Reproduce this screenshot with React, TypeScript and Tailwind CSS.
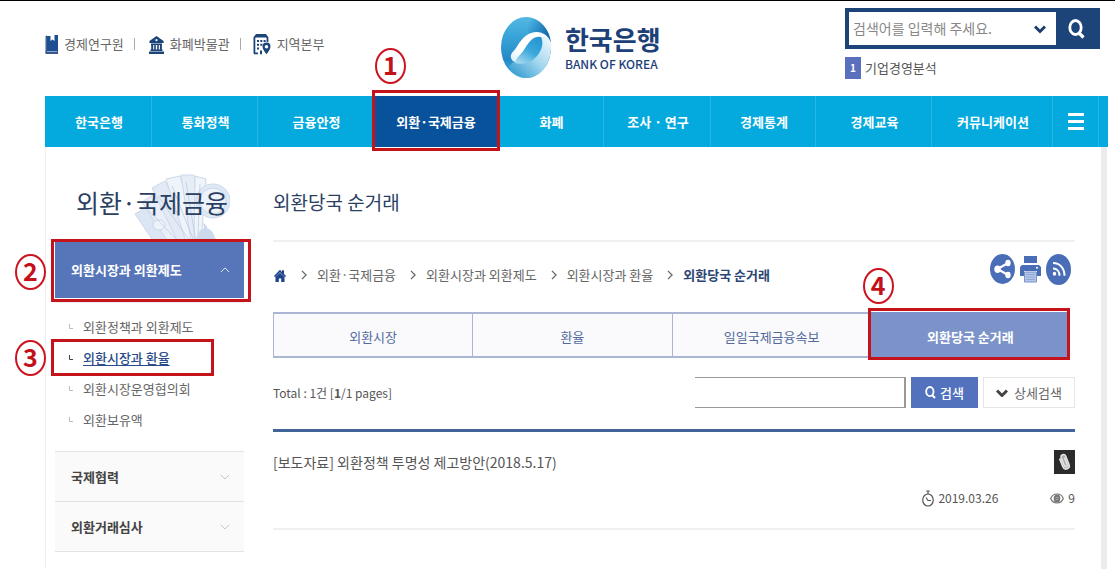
import type { ReactNode } from "react";

type Tone = { className: string };

function StepNumber({ n, className }: { n: number; className: string }) {
  return (
    <span
      className={`pointer-events-none absolute z-20 flex h-9 w-[31px] items-center justify-center rounded-[50%] border-2 border-[#cc1420] pb-1 text-[25px] leading-none font-bold text-[#c41019] ${className}`}
    >
      {n}
    </span>
  );
}

function Marker({ className }: Tone) {
  return <span aria-hidden="true" className={`pointer-events-none absolute z-10 border-3 border-[#c4131a] ${className}`} />;
}

function BookIcon() {
  return (
    <svg viewBox="0 0 13 19" className="h-[19px] w-[13px]" aria-hidden="true">
      <path d="M.5 1.500 2 0v16L.5 18z" fill="#43618d" />
      <path d="M2 1h3.500v5l2-1.500L9.500 6V0H13v16H2z" fill="#1d4f93" />
      <path d="M.5 16H13v3H.5z" fill="#36578a" />
      <path d="M2 16.200h10v.8H2z" fill="#a9bcd8" />
    </svg>
  );
}

function MuseumIcon() {
  return (
    <svg viewBox="0 0 15 19" className="h-[19px] w-[15px]" fill="#1d4479" aria-hidden="true">
      <path d="M7.5 1 14.6 6v2H.4V6z" />
      <circle cx="7.5" cy="5.2" r="1.1" fill="#fff" />
      <path d="M2 8.5h11V10H2zM2.2 10h2v5h-2zM5.2 10h1.6v5H5.2zM8.2 10h1.6v5H8.2zM10.9 10h2v5h-2zM1.5 14.6h12V16h-12zM0 16.6h15V19H0z" />
    </svg>
  );
}

function BranchIcon() {
  return (
    <svg viewBox="0 0 18 21" className="h-[21px] w-[18px]" aria-hidden="true">
      <path d="M1.4 19.5V3.5L3.5 1h9l2 2.5V8" fill="none" stroke="#1d4479" strokeWidth="1.8" />
      <path d="M2 1.5h12v2H2zM4 6h2v2H4zM7.3 6h2v2h-2zM10.6 6h2v2h-2zM4 9.7h2v2H4zM7.3 9.7h2v2h-2zM4 13.4h2v2H4zM1 18.5h4v1.8H1zM7 16.5h2v3.8H7z" fill="#1d4479" />
      <path d="M13.5 8.5a4 4 0 0 1 4 4c0 2.8-2.3 5.2-4 7.8-1.7-2.6-4-5-4-7.8a4 4 0 0 1 4-4z" fill="#1d4479" />
      <circle cx="13.5" cy="12.7" r="1.8" fill="#fff" />
    </svg>
  );
}

function BankLogo() {
  return (
    <svg viewBox="0 0 50 61" className="h-[61px] w-[50px]" aria-hidden="true">
      <defs>
        <linearGradient id="logoBase" x1="0.4" y1="0" x2="0.4" y2="1">
          <stop offset="0" stopColor="#53b8e2" />
          <stop offset="0.3" stopColor="#3aa5d8" />
          <stop offset="0.7" stopColor="#2389c6" />
          <stop offset="1" stopColor="#4fb2de" />
        </linearGradient>
        <linearGradient id="logoPale" x1="0.95" y1="0" x2="0.1" y2="0.9">
          <stop offset="0" stopColor="#eef8fd" />
          <stop offset="0.5" stopColor="#a5d8ef" />
          <stop offset="1" stopColor="#3a9fd3" />
        </linearGradient>
        <linearGradient id="logoSwoosh" x1="0" y1="1" x2="1" y2="0">
          <stop offset="0" stopColor="#d8eef9" />
          <stop offset="0.3" stopColor="#ffffff" />
          <stop offset="0.8" stopColor="#ffffff" />
          <stop offset="1" stopColor="#d5ecf7" />
        </linearGradient>
        <linearGradient id="logoDrop" x1="0.8" y1="0" x2="0.2" y2="1">
          <stop offset="0" stopColor="#2596d0" />
          <stop offset="0.5" stopColor="#3aa8dc" />
          <stop offset="1" stopColor="#a5d8ef" />
        </linearGradient>
        <linearGradient id="logoCap" x1="0" y1="0" x2="1" y2="0.3">
          <stop offset="0.2" stopColor="#1a77b8" stopOpacity="0" />
          <stop offset="1" stopColor="#1268ab" />
        </linearGradient>
      </defs>
      <ellipse cx="25" cy="30.500" rx="25" ry="30.500" fill="url(#logoBase)" />
      <path d="M25 0c13 0 23 11 25 25-5-9-13-11-21-8C24 11 22 5 25 0z" fill="url(#logoCap)" />
      <path d="M50 26c1 18-9 35-25 35-7 0-13-5-17-11 2-3 3-5 6-5 10 0 18-3 23-10 3-5 4-10 3-15 5 0 8 2 10 6z" fill="url(#logoPale)" />
      <path d="M50 26c-3-9-11-13-20-10-8 3-11 9-15 15-3 4-6 6-5 10 1 3 3 4 5 4 1-5 5-7 8-12 4-6 7-12 13-13 6-1 11 1 14 6z" fill="url(#logoSwoosh)" />
      <path d="M40 20c3 6 1 13-4 19-6 7-14 9-22 7 1-6 6-7 10-14 4-6 7-12 16-12z" fill="url(#logoDrop)" />
    </svg>
  );
}

function SearchIcon({ className }: Tone) {
  return (
    <svg viewBox="0 0 17 20" className={className} fill="none" stroke="currentColor" aria-hidden="true">
      <ellipse cx="7.500" cy="8.500" rx="5.700" ry="7" strokeWidth="2.800" />
      <path d="m10.500 13.500 5 5" strokeWidth="3.200" />
    </svg>
  );
}

function Chevron({ className, weight }: { className: string; weight: number }) {
  return (
    <svg viewBox="0 0 12 8" className={className} fill="none" stroke="currentColor" strokeWidth={weight} aria-hidden="true">
      <path d="m1 1.500 5 5 5-5" />
    </svg>
  );
}

function Banknotes() {
  return (
    <svg viewBox="0 0 96 68" className="absolute right-[14px] bottom-0 h-[68px] w-24" aria-hidden="true">
      <g stroke="#ccd8ea" strokeWidth="1">
        <path d="m1 40 10-6 34 34H20z" fill="#dbe5f3" />
        <path d="m8 28 11-7 38 47H34z" fill="#e8eff8" />
        <path d="M18 14 31 7l32 61H44z" fill="#e2eaf5" />
        <path d="m32 5 14-3 20 66H52z" fill="#eff4fa" />
        <path d="M47 1h13l6 67h-9z" fill="#e6edf7" />
        <path d="m61 2 11 3-5 63h-7z" fill="#f1f5fa" />
        <circle cx="79" cy="27" r="17" fill="#dfe9f5" />
        <circle cx="79" cy="27" r="13" fill="#edf3fa" />
        <ellipse cx="25" cy="51" rx="6" ry="5" fill="#eef3fa" />
      </g>
      <g fill="none" stroke="#bccbe3" strokeWidth="0.800">
        <path d="m14 36 30 31M24 22l32 45M38 12l22 55M52 8l10 60M66 10l-2 50" />
      </g>
      <path d="M62 68c0-7 3-12 8-14l-1-5c3 1 4 3 4 5 5 2 7 6 8 10l4 4z" fill="#cddaec" />
    </svg>
  );
}

function HomeIcon() {
  return (
    <svg viewBox="0 0 12 13" className="h-[13px] w-3" fill="#1f4489" aria-hidden="true">
      <path d="M6 .8 8 3V1.300h2V5l2 2-1 1.300-5-5-5 5L0 7z" />
      <path d="M6 3.800 10.500 8v5H7.200V9.500H4.800V13H1.500V8z" />
    </svg>
  );
}

function ShareIcon() {
  return (
    <svg viewBox="0 0 25 30" className="h-[30px] w-[25px]" aria-hidden="true">
      <ellipse cx="12.500" cy="15" rx="12.500" ry="15" fill="#4a6db8" />
      <path d="M18 9 7.500 15 18 21" fill="none" stroke="#fff" strokeWidth="2.200" />
      <g fill="#fff">
        <ellipse cx="18" cy="9" rx="2.700" ry="3.200" />
        <ellipse cx="7.500" cy="15.200" rx="3.200" ry="3.700" />
        <ellipse cx="18" cy="21" rx="2.700" ry="3.200" />
      </g>
    </svg>
  );
}

function PrintIcon() {
  return (
    <svg viewBox="0 0 21 28" className="h-7 w-[21px]" aria-hidden="true">
      <path d="M4 1h13v7H4z" fill="#4a6db8" />
      <path d="M2 10h17l2 2v9h-4v-5H4v5H0v-9z" fill="#4a6db8" />
      <path d="M16 12h2v1.500h-2z" fill="#fff" />
      <path d="M4.500 17h12v10h-12z" fill="#b4c5e8" stroke="#7892cb" />
      <path d="M6 19.500h9M6 22h9M6 24.500h9" stroke="#90a7d8" />
    </svg>
  );
}

function RssIcon() {
  return (
    <svg viewBox="0 0 25 31" className="h-[31px] w-[25px]" aria-hidden="true">
      <ellipse cx="12.500" cy="15.500" rx="12.500" ry="15.500" fill="#4a6db8" />
      <ellipse cx="8.500" cy="19.800" rx="1.700" ry="2" fill="#fff" />
      <path d="M7 14.500c4 0 6.500 3 6.500 7.300M7 9c7 0 11.500 5.500 11.500 12.800" fill="none" stroke="#fff" strokeWidth="2" />
    </svg>
  );
}

function ClipIcon() {
  return (
    <svg viewBox="0 0 21 24" className="h-6 w-[21px]" aria-label="첨부파일" role="img">
      <path d="M0 0h21v24H0z" fill="#2b2b2b" />
      <g transform="rotate(-22 10.500 12)" fill="none" stroke="#e4e4e4" strokeWidth="1.500">
        <path d="M7.200 7v9a3.300 3.300 0 0 0 6.600 0V7a2.400 2.400 0 0 0-4.800 0v8.500a1.500 1.500 0 0 0 3 0V8" fill="#aaa" />
      </g>
    </svg>
  );
}

function ClockIcon() {
  return (
    <svg viewBox="0 0 12 17" className="h-[17px] w-3" fill="none" stroke="#555" strokeWidth="1.200" aria-hidden="true">
      <ellipse cx="6" cy="10" rx="5.300" ry="6" />
      <path d="M6 4V1M4.300 1h3.400M4 7.500l2 3h3" />
    </svg>
  );
}

function EyeIcon() {
  return (
    <svg viewBox="0 0 14 11" className="h-[11px] w-3.5" fill="none" stroke="#777" strokeWidth="1.200" aria-hidden="true">
      <path d="M.7 5.500C3-.5 11-.5 13.300 5.500 11 11.500 3 11.500.7 5.500z" />
      <ellipse cx="7" cy="5.500" rx="2.700" ry="3.400" fill="#777" />
      <path d="M5.500 4.500h3M5.500 6.500h3" stroke="#bbb" strokeWidth="0.700" />
    </svg>
  );
}

function TopLink({ icon, children }: { icon: ReactNode; children: ReactNode }) {
  return (
    <a href="#" className="flex items-center gap-1.5">
      {icon}
      {children}
    </a>
  );
}

const menu = ["한국은행", "통화정책", "금융안정", "외환·국제금융", "화폐", "조사 · 연구", "경제통계", "경제교육", "커뮤니케이션"];
const subMenu = ["외환정책과 외환제도", "외환시장과 환율", "외환시장운영협의회", "외환보유액"];
const trail = ["외환·국제금융", "외환시장과 외환제도", "외환시장과 환율", "외환당국 순거래"];
const tabs = ["외환시장", "환율", "일일국제금융속보", "외환당국 순거래"];

function Header() {
  return (
    <header className="flex h-[95px] items-start justify-between pr-[15px] pl-[45px]">
      <div className="flex h-[86px] items-center gap-2.5 text-[13px] text-[#666]">
        <TopLink icon={<BookIcon />}>경제연구원</TopLink>
        <span className="h-3 w-px bg-[#aaa]" />
        <span className="ml-1">
          <TopLink icon={<MuseumIcon />}>화폐박물관</TopLink>
        </span>
        <span className="h-3 w-px bg-[#aaa]" />
        <span className="ml-0.5">
          <TopLink icon={<BranchIcon />}>지역본부</TopLink>
        </span>
      </div>
      <a href="#" className="flex items-center gap-3.5 pt-4 pr-2">
        <BankLogo />
        <span className="flex flex-col text-[#1c4077]">
          <strong className="text-[26px] leading-8 font-bold">한국은행</strong>
          <span className="text-[12px] leading-[18px] font-medium">BANK OF KOREA</span>
        </span>
      </a>
      <div className="w-[255px] pt-[7px]">
        <form className="flex h-[41px] border-4 border-[#1d4479] bg-[#1d4479]" onSubmit={(e) => e.preventDefault()}>
          <div className="flex min-w-0 flex-1 items-center bg-white pr-2.5 pl-1">
            <input
              aria-label="통합검색"
              placeholder="검색어를 입력해 주세요."
              className="min-w-0 flex-1 text-[14px] outline-none placeholder:text-[#888]"
            />
            <button type="button" aria-label="검색어 목록" className="text-[#1d3c6d]">
              <Chevron className="h-2.5 w-3" weight={3} />
            </button>
          </div>
          <button type="submit" aria-label="검색" className="flex w-10 items-center justify-center text-white">
            <SearchIcon className="h-5 w-[17px]" />
          </button>
        </form>
        <p className="mt-2 flex items-center gap-1 text-[13px] leading-[22px] text-[#555]">
          <span className="flex h-[22px] w-4 items-center justify-center bg-[#5a70bd] text-[10px] font-bold text-white">1</span>
          <a href="#">기업경영분석</a>
        </p>
      </div>
    </header>
  );
}

function MainMenu() {
  return (
    <nav className="relative mr-[7px] ml-[45px] grid h-[51px] grid-cols-[107fr_106fr_116fr_124fr_106fr_107fr_105fr_116fr_121fr_46px_9px] bg-[#04aadd] text-[13px] font-bold text-white">
      {menu.map((label) =>
        label === "외환·국제금융" ? (
          <div key={label} className="relative flex bg-[#07529a]">
            <a href="#" className="flex flex-1 items-center justify-center">{label}</a>
            <Marker className="-inset-x-0.5 -top-1.5 -bottom-1" />
            <StepNumber n={1} className="-top-12 left-px" />
          </div>
        ) : (
          <a key={label} href="#" className="flex items-center justify-center border-r border-[#27b5e2] pl-0.5">
            {label}
          </a>
        ),
      )}
      <button type="button" aria-label="전체메뉴" className="flex flex-col items-center justify-center gap-1 border-r border-[#27b5e2]">
        <span className="h-[3px] w-4 bg-white" />
        <span className="h-[3px] w-4 bg-white" />
        <span className="h-[3px] w-4 bg-white" />
      </button>
    </nav>
  );
}

function Sidebar() {
  return (
    <aside className="w-[189px] shrink-0">
      <div className="relative h-[95px] pt-[35px] pl-[21px]">
        <Banknotes />
        <h2 className="relative text-[25px] leading-10 whitespace-nowrap text-[#2b3f63]">외환·국제금융</h2>
      </div>
      <div className="relative">
        <button type="button" className="flex h-14 w-full items-center justify-between bg-[#5775b9] pr-3.5 pl-4 text-[13px] font-bold text-white">
          외환시장과 외환제도
          <Chevron className="h-2 w-2.5 rotate-180" weight={1} />
        </button>
        <Marker className="-top-[3px] -right-[7px] -bottom-1 -left-1" />
        <StepNumber n={2} className="top-3 -left-10" />
      </div>
      <ul className="mt-1 border-t border-[#eee] pt-2 pb-4 text-[13px] text-[#666]">
        {subMenu.map((label) => {
          const current = label === "외환시장과 환율";
          return (
            <li key={label} className="relative flex h-[31px] items-center gap-2.5 pl-3.5">
              <svg viewBox="0 0 4 5" className={`h-[5px] w-1 ${current ? "text-[#444]" : "text-[#bbb]"}`} aria-hidden="true">
                <path d="M.5 0v4.500H4" fill="none" stroke="currentColor" />
              </svg>
              <a href="#" className={current ? "font-medium text-[#2a4c8a] underline underline-offset-2" : ""}>
                {label}
              </a>
              {current && <Marker className="-inset-y-[3px] right-[30px] -left-1" />}
              {current && <StepNumber n={3} className="-top-0.5 -left-10" />}
            </li>
          );
        })}
      </ul>
      {["국제협력", "외환거래심사"].map((label) => (
        <button
          key={label}
          type="button"
          className="flex h-[50px] w-full items-center justify-between border-t border-[#e3e3e3] bg-[#fafafa] pr-3.5 pl-4 text-[13px] font-bold text-[#444]"
        >
          {label}
          <Chevron className="h-2 w-2.5 text-[#bbb]" weight={1} />
        </button>
      ))}
      <div className="border-t border-[#e3e3e3]" />
    </aside>
  );
}

function Content() {
  return (
    <main className="min-w-0 flex-1">
      <h1 className="flex h-[95px] items-center border-b-2 border-[#f0f0f0] pt-[18px] text-[19px] text-[#2b3f63]">외환당국 순거래</h1>
      <div className="flex h-[70px] items-center justify-between pr-1 pb-2">
        <ol className="flex items-center pt-1 text-[13px] text-[#666]">
          <li>
            <a href="#" aria-label="홈" className="block px-px">
              <HomeIcon />
            </a>
          </li>
          {trail.map((label, i) => (
            <li key={label} className="flex items-center">
              <Chevron className="mr-2 ml-3 h-2 w-2.5 -rotate-90 text-[#666]" weight={1.5} />
              <a href="#" className={i === 3 ? "font-bold text-[#2b4675]" : ""}>{label}</a>
            </li>
          ))}
        </ol>
        <div className="flex items-center gap-[5px] pb-2">
          <button type="button" aria-label="공유"><ShareIcon /></button>
          <button type="button" aria-label="인쇄"><PrintIcon /></button>
          <button type="button" aria-label="RSS"><RssIcon /></button>
        </div>
      </div>
      <div className="mr-[5px] grid h-[46px] grid-cols-4 text-[13px]">
        {tabs.map((label) =>
          label === "외환당국 순거래" ? (
            <div key={label} className="relative flex bg-[#7b93c9]">
              <a href="#" className="flex flex-1 items-center justify-center pt-1 font-bold text-white">{label}</a>
              <Marker className="-top-1 right-0 -bottom-0.5 -left-[3px]" />
              <StepNumber n={4} className="-top-11 -left-2" />
            </div>
          ) : (
            <a
              key={label}
              href="#"
              className="flex items-center justify-center border-y-2 border-l border-[#aab6d3] bg-[#fafafc] pt-1 text-[#526a9c]"
            >
              {label}
            </a>
          ),
        )}
      </div>
      <div className="flex h-[74px] items-center justify-between border-b-[3px] border-[#41659a] pb-0.5">
        <p className="text-[12px] text-[#555]">
          Total : 1건 [<b>1</b>/1 pages]
        </p>
        <form className="flex h-[31px] gap-[5px] text-[13px]" onSubmit={(e) => e.preventDefault()}>
          <input aria-label="검색어" className="w-[211px] border-y border-r-2 border-[#999] px-2 outline-none" />
          <button type="submit" className="flex w-[67px] items-center justify-center gap-1 bg-[#5272bd] font-medium text-white">
            <SearchIcon className="h-[13px] w-[11px]" />
            검색
          </button>
          <button type="button" className="flex w-[92px] items-center justify-center gap-1.5 border border-[#e6e6e6] text-[#666]">
            <Chevron className="h-2 w-3 text-[#444]" weight={3} />
            상세검색
          </button>
        </form>
      </div>
      <article className="border-b-2 border-[#f0f0f0] pt-[18px] pb-[18px] text-[#555]">
        <div className="flex items-center justify-between text-[14px]">
          <a href="#">[보도자료] 외환정책 투명성 제고방안(2018.5.17)</a>
          <ClipIcon />
        </div>
        <div className="mt-3 flex items-center justify-end text-[12px] leading-6">
          <span className="flex items-center gap-1"><ClockIcon />2019.03.26</span>
          <span className="ml-[52px] flex items-center gap-1"><EyeIcon />9</span>
        </div>
      </article>
    </main>
  );
}

export default function App() {
  return (
    <div className="border-t border-black bg-white font-['Noto_Sans_CJK_KR',sans-serif]">
      <Header />
      <MainMenu />
      <div className="mr-2 ml-[45px] flex gap-[29px] border-r-[6px] border-l border-r-[#ebebeb] border-l-[#f0f0f0] pr-[26px] pb-[17px] pl-[9px]">
        <Sidebar />
        <Content />
      </div>
    </div>
  );
}
